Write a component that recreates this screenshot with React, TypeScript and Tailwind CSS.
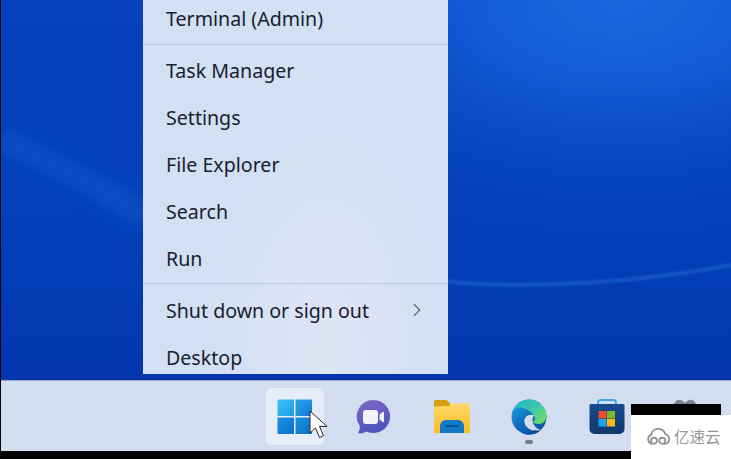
import { ChevronRight } from "lucide-react";

const menuFont = "font-['Noto_Sans',sans-serif]";

function MenuItem({ label, arrow }: { label: string; arrow?: boolean }) {
  return (
    <div className="flex h-[47px] shrink-0 items-center justify-between pl-[23px] pr-[20px] pt-[2px] text-[19.6px] leading-none text-[#182030]">
      <span>{label}</span>
      {arrow && <ChevronRight className="-mt-[2px] h-[22px] w-[22px] text-[#5a6375]" strokeWidth={1.2} />}
    </div>
  );
}

function Separator({ className }: { className: string }) {
  return <div className={`h-[1px] shrink-0 bg-[#bcc9df] ${className}`} />;
}

function Wallpaper() {
  return (
    <svg className="absolute inset-0 h-full w-full" viewBox="0 0 730 380" preserveAspectRatio="none">
      <defs>
        <linearGradient id="wallBase" x1="0" y1="0" x2="0" y2="1">
          <stop offset="0" stopColor="#0642bd" />
          <stop offset="0.6" stopColor="#0340b8" />
          <stop offset="1" stopColor="#0335ad" />
        </linearGradient>
        <radialGradient
          id="wallGlow"
          cx="0"
          cy="0"
          r="430"
          gradientUnits="userSpaceOnUse"
          gradientTransform="translate(620 0) scale(1 0.56)">
          <stop offset="0" stopColor="#1b67de" />
          <stop offset="0.35" stopColor="#165fd8" stopOpacity="0.85" />
          <stop offset="1" stopColor="#0642bd" stopOpacity="0" />
        </radialGradient>
        <filter id="soft" x="-20%" y="-100%" width="140%" height="300%">
          <feGaussianBlur stdDeviation="1.6" />
        </filter>
        <filter id="softer" x="-30%" y="-100%" width="160%" height="300%">
          <feGaussianBlur stdDeviation="9" />
        </filter>
      </defs>
      <rect width="730" height="380" fill="url(#wallBase)" />
      <rect width="730" height="380" fill="url(#wallGlow)" />
      <path d="M0 140 C50 160 100 190 145 215" stroke="#1557cb" strokeWidth="18" fill="none" filter="url(#softer)" opacity="0.75" />
      <path d="M440 281 C530 290 640 282 731 265" stroke="#1f66d6" strokeWidth="2.5" fill="none" filter="url(#soft)" />
    </svg>
  );
}

function StartIcon() {
  return (
    <svg width="36" height="36" viewBox="0 0 36 36">
      <defs>
        <linearGradient id="winA" x1="0" y1="0" x2="1" y2="1">
          <stop offset="0" stopColor="#3fc4f7" />
          <stop offset="1" stopColor="#1b9be6" />
        </linearGradient>
        <linearGradient id="winB" x1="0" y1="0" x2="1" y2="1">
          <stop offset="0" stopColor="#2ba6ec" />
          <stop offset="1" stopColor="#1276d3" />
        </linearGradient>
        <linearGradient id="winC" x1="0" y1="0" x2="1" y2="1">
          <stop offset="0" stopColor="#1a92e0" />
          <stop offset="1" stopColor="#0f6fc9" />
        </linearGradient>
      </defs>
      <path d="M1.5 0.5H17V17H0.5V1.5a1 1 0 0 1 1-1z" fill="url(#winA)" />
      <path d="M18.500 0.5H34a1 1 0 0 1 1 1V17H18.500z" fill="url(#winB)" />
      <path d="M0.5 18.500H17V35H1.500a1 1 0 0 1-1-1z" fill="url(#winC)" />
      <path d="M18.500 18.500H35V34a1 1 0 0 1-1 1H18.500z" fill="url(#winC)" />
    </svg>
  );
}

function MeetIcon() {
  return (
    <svg width="36" height="36" viewBox="0 0 36 36">
      <defs>
        <linearGradient id="chatFill" x1="0.2" y1="0" x2="0.5" y2="1">
          <stop offset="0" stopColor="#7f65c4" />
          <stop offset="1" stopColor="#4a55bd" />
        </linearGradient>
      </defs>
      <path d="M18.500 1a16.500 16.500 0 1 1-7 31.400c-2.300 1.200-4.700 1.800-7.200 2.100-.8 0-1.100-.7-.8-1.300 1-1.700 1.300-3.800 1.300-6.200A16.500 16.500 0 0 1 18.500 1z" fill="url(#chatFill)" />
      <rect x="8" y="11" width="15" height="14" rx="3" fill="#f4f2fb" />
      <path d="M24.500 15.500l3.300-2.400c.7-.5 1.200-.2 1.200.6v8.600c0 .8-.5 1.100-1.200.6l-3.300-2.400z" fill="#f4f2fb" />
    </svg>
  );
}

function FolderIcon() {
  return (
    <svg className="ml-[2px]" width="38" height="36" viewBox="0 0 38 36">
      <defs>
        <linearGradient id="folderFill" x1="0" y1="0" x2="0" y2="1">
          <stop offset="0" stopColor="#fcd86a" />
          <stop offset="1" stopColor="#fbbc1e" />
        </linearGradient>
      </defs>
      <path d="M1 2.500a1.500 1.500 0 0 1 1.500-1.500h10c1 0 1.600.4 2.300 1.200L17 4.500v5H1z" fill="#d79e12" />
      <path d="M1 7.500l15-.5 2-2.500h18.500a.5.500 0 0 1 .5.5V33a1 1 0 0 1-1 1H2a1 1 0 0 1-1-1z" fill="url(#folderFill)" />
      <path d="M7 34v-7a6 6 0 0 1 6-6h12a6 6 0 0 1 6 6v7z" fill="#0f78c9" />
      <rect x="12.500" y="26" width="13" height="2" rx="1" fill="#0a4f93" />
    </svg>
  );
}

function EdgeIcon() {
  return (
    <svg width="36" height="36" viewBox="0 0 36 36">
      <defs>
        <linearGradient id="edgeBody" x1="0" y1="0.2" x2="0.6" y2="1">
          <stop offset="0" stopColor="#1f9fdc" />
          <stop offset="0.5" stopColor="#1271c0" />
          <stop offset="1" stopColor="#0e54a2" />
        </linearGradient>
        <linearGradient id="edgeCap" x1="0" y1="0" x2="1" y2="0.7">
          <stop offset="0" stopColor="#25afd0" />
          <stop offset="0.55" stopColor="#38c6ae" />
          <stop offset="1" stopColor="#6cd96c" />
        </linearGradient>
      </defs>
      <circle cx="18" cy="18" r="17.500" fill="url(#edgeBody)" />
      {/* green cap running over the top into the right lobe */}
      <path d="M1.500 12C5 4.500 11 .5 18 .5c9.500 0 17.500 8 17.500 16 0 5-3.500 8.500-8 8.500-2.500 0-4.500-.8-5.500-2 1.800-1 2.500-3 1.500-5.500C22 13 14 8.500 9 8.500c-3.500 0-6 1.500-7.500 3.500z" fill="url(#edgeCap)" />
      {/* light swoosh */}
      <path d="M23.500 16.500C18 14 12.500 18 13.500 23.500c.8 4.500 5.500 8 11 8.500 2.200.2 4.200-.2 5.500-1-3-.6-5.500-2.500-7-5-1.500-2.500-2-5.500-1-8 .5-.8 1-1.500 1.500-2.500z" fill="#d3ddf0" />
      <path d="M30 31c-3 3-7 4.500-12 4.500-2.500 0-4.500-.5-6-1.500 4 .8 8 0 11.500-3 2 .6 4.300.8 6.500 0z" fill="#0b4a93" />
    </svg>
  );
}

function StoreIcon() {
  return (
    <svg width="36" height="36" viewBox="0 0 36 36">
      <defs>
        <linearGradient id="storeBag" x1="0" y1="0" x2="0" y2="1">
          <stop offset="0" stopColor="#174a8c" />
          <stop offset="1" stopColor="#0f386d" />
        </linearGradient>
      </defs>
      <path d="M9 5.500V3.500A2.500 2.500 0 0 1 11.500 1h13A2.500 2.500 0 0 1 27 3.500v2" fill="none" stroke="#38a7e8" strokeWidth="1.800" />
      <path d="M.5 6.500A1.500 1.500 0 0 1 2 5h32a1.500 1.500 0 0 1 1.500 1.500V30a5 5 0 0 1-5 5H5.500a5 5 0 0 1-5-5z" fill="url(#storeBag)" />
      <rect x="9.500" y="12" width="8" height="7.500" fill="#ef4d2c" />
      <rect x="18" y="12" width="8" height="7.500" fill="#7cb82a" />
      <rect x="9.500" y="20" width="8" height="7.500" fill="#18a3ea" />
      <rect x="18" y="20" width="8" height="7.500" fill="#fdb913" />
    </svg>
  );
}

function HiddenIcon() {
  return (
    <svg width="36" height="36" viewBox="0 0 36 36">
      <path d="M7 5c2-5 7-5 9-2.500l2 1 2-1c2-2.500 7-2.500 9 2.500v23H7z" fill="#7b8290" />
    </svg>
  );
}

function TaskSlot({ active, children }: { active?: boolean; children: React.ReactNode }) {
  return (
    <div
      className={`relative flex h-[57px] w-[58px] shrink-0 items-center justify-center rounded-[5px] ${
        active ? "bg-[#e6ecf8] shadow-[0_0_1px_#c3cee2]" : ""
      }`}>
      {children}
    </div>
  );
}

function Cursor() {
  return (
    <svg className="absolute left-[309px] top-[410px]" width="20" height="30" viewBox="0 0 20 30">
      <path d="M1 1v22l5.500-5 4 9.500 4-1.800-4-9.300H18z" fill="#ffffff" stroke="#23272f" strokeWidth="1" strokeLinejoin="round" />
    </svg>
  );
}

function CloudLogo() {
  return (
    <svg width="25" height="17" viewBox="0 0 29 22" fill="none" stroke="#8e8e8e" strokeWidth="2.200">
      <path d="M7 20.500a6 6 0 0 1-2-11.600C5.500 4 9.500 1.200 14 1.200c4.500 0 8.300 2.800 9.300 7a6.200 6.200 0 0 1-.8 12.300h-2" />
      <path d="M7.500 20.500c3.500 0 5-2 5-4.200a3.900 3.900 0 0 0-7.800 0c0 1.300.8 2.300 2.100 2.300" />
      <path d="M20.500 20.500c-3 0-5-1.800-5-4.200a3.900 3.900 0 0 1 7.800 0c0 1.300-.8 2.300-2.100 2.300" />
    </svg>
  );
}

export default function App() {
  return (
    <div className={`relative flex h-[459px] w-[731px] flex-col overflow-hidden bg-black pl-[1px] ${menuFont}`}>
      {/* desktop with the open start menu */}
      <div className="relative h-[380px] shrink-0">
        <Wallpaper />
        <div className="relative ml-[142px] flex h-[374px] w-[305px] flex-col overflow-hidden bg-[radial-gradient(ellipse_at_60%_95%,#dee6f5_0%,#d3dff2_45%)]">
          <div className="flex h-[37px] shrink-0 items-center pl-[23px] text-[19.6px] leading-none text-[#182030]">Terminal (Admin)</div>
          <Separator className="mt-[7px]" />
          <div className="mt-[1px] flex flex-col">
            <MenuItem label="Task Manager" />
            <MenuItem label="Settings" />
            <MenuItem label="File Explorer" />
            <MenuItem label="Search" />
            <MenuItem label="Run" />
          </div>
          <Separator className="mt-[2px]" />
          <div className="mt-[2px] flex flex-col">
            <MenuItem label="Shut down or sign out" arrow />
            <MenuItem label="Desktop" />
          </div>
        </div>
      </div>

      {/* taskbar */}
      <div className="flex h-[71px] shrink-0 items-start gap-[20px] border-t border-[#9aa9c9] bg-[#d3ddf0] pl-[265px] pt-[7px]">
        <TaskSlot active>
          <StartIcon />
        </TaskSlot>
        <TaskSlot>
          <MeetIcon />
        </TaskSlot>
        <TaskSlot>
          <FolderIcon />
        </TaskSlot>
        <TaskSlot>
          <EdgeIcon />
          <span className="absolute bottom-[1px] left-1/2 h-[4px] w-[8px] -translate-x-1/2 rounded-full bg-[#757c8a]" />
        </TaskSlot>
        <TaskSlot>
          <StoreIcon />
        </TaskSlot>
        <TaskSlot>
          <HiddenIcon />
        </TaskSlot>
      </div>

      <Cursor />

      {/* watermark pasted over the corner */}
      <div className="absolute left-[631px] top-[404px] h-[11px] w-[90px] bg-black" />
      <div className="absolute left-[631px] top-[415px] flex h-[44px] w-[100px] items-center gap-[3px] bg-white pb-[1px] pl-[15px]">
        <CloudLogo />
        <span className="font-['Noto_Sans_CJK_SC',sans-serif] text-[15.5px] leading-none text-[#979797]">亿速云</span>
      </div>
    </div>
  );
}
